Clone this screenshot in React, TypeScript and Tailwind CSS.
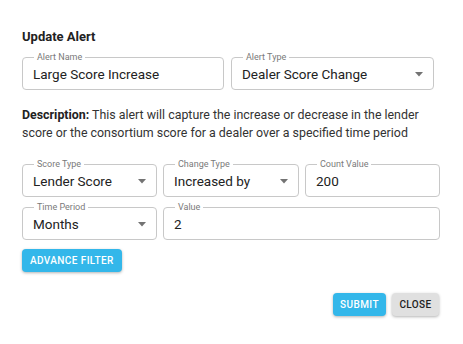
import React from 'react';

const Caret = () => (
  <svg width="8" height="5" viewBox="0 0 8 5" className="shrink-0">
    <path d="M0 0 L8 0 L4 4.5 Z" fill="#737373" />
  </svg>
);

interface FieldProps {
  label: string;
  value: string;
  width: string;
  select?: boolean;
}

const Field: React.FC<FieldProps> = ({ label, value, width, select }) => (
  <fieldset className={`${width} h-[37px] shrink-0 rounded-[4px] border border-[#c8c8c8] pl-[10px] pr-[10px] pb-[2px]`}>
    <legend className="ml-[1px] px-[3px] text-[9px] leading-[9px] text-[#7a7a7a]">{label}</legend>
    <div className="flex h-full items-center justify-between">
      <span className="text-[13.5px] text-[#222]">{value}</span>
      {select && <Caret />}
    </div>
  </fieldset>
);

const App: React.FC = () => {
  return (
    <div
      className="h-[344px] w-[463px] bg-white px-[22px] pt-[29px]"
      style={{ fontFamily: 'Roboto, "Liberation Sans", sans-serif' }}
    >
      <h1 className="text-[13px] font-bold leading-[16px] text-[#222]">Update Alert</h1>

      <div className="mt-[8px] flex gap-[7px]">
        <Field label="Alert Name" value="Large Score Increase" width="w-[202px]" />
        <Field label="Alert Type" value="Dealer Score Change" width="w-[203px]" select />
      </div>

      <p className="mt-[16px] text-[12.4px] leading-[18px] text-[#333]">
        <span className="font-bold text-[#222]">Description:</span> This alert will capture the increase or decrease in the lender score or the consortium score for a dealer over a specified time period
      </p>

      <div className="mt-[18px] flex gap-[6px]">
        <Field label="Score Type" value="Lender Score" width="w-[135px]" select />
        <Field label="Change Type" value="Increased by" width="w-[136px]" select />
        <Field label="Count Value" value="200" width="w-[135px]" />
      </div>

      <div className="mt-[6px] flex gap-[6px]">
        <Field label="Time Period" value="Months" width="w-[135px]" select />
        <Field label="Value" value="2" width="w-[277px]" />
      </div>

      <button className="mt-[9px] h-[23px] rounded-[4px] bg-[#33b7ea] px-[8px] text-[10px] font-medium tracking-[0.4px] text-white shadow-[0_1px_3px_rgba(0,0,0,0.3)]">
        ADVANCE FILTER
      </button>

      <div className="mt-[21px] flex justify-end gap-[6px] pr-[2px]">
        <button className="h-[23px] w-[53px] rounded-[4px] bg-[#33b7ea] text-[10px] font-medium tracking-[0.4px] text-white shadow-[0_1px_3px_rgba(0,0,0,0.3)]">
          SUBMIT
        </button>
        <button className="h-[23px] w-[47px] rounded-[4px] bg-[#e0e0e0] text-[10px] font-medium tracking-[0.4px] text-[#222] shadow-[0_1px_3px_rgba(0,0,0,0.3)]">
          CLOSE
        </button>
      </div>
    </div>
  );
};

export default App;
